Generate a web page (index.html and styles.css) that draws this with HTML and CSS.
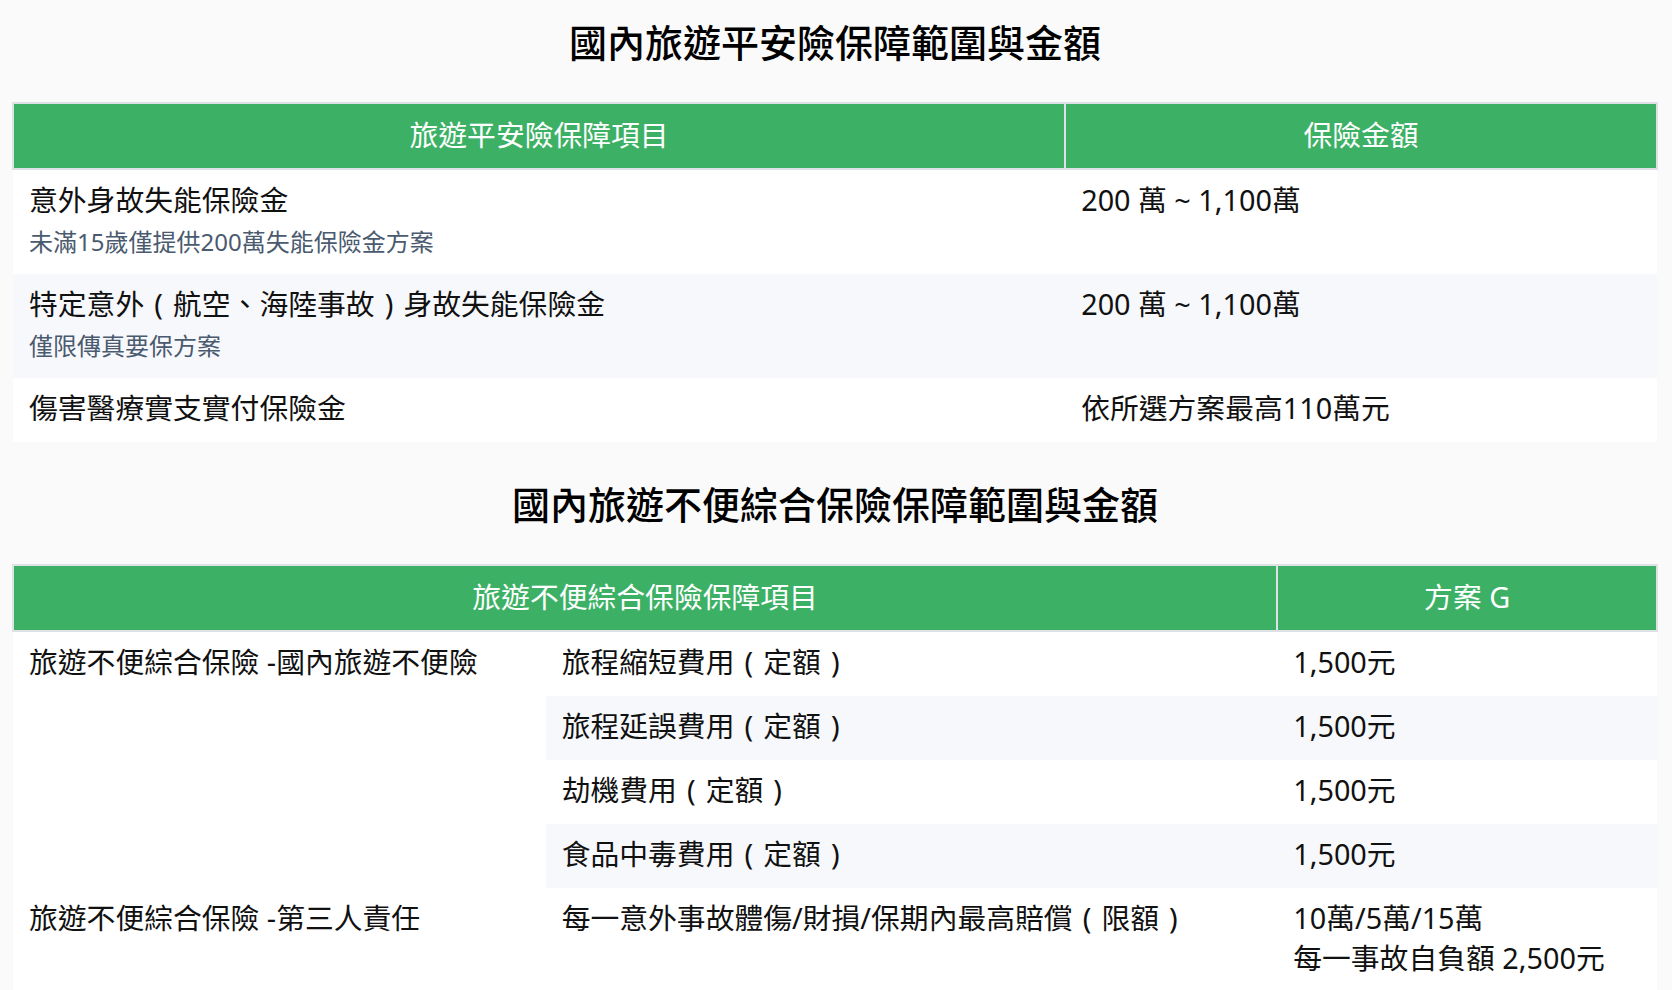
FILE: index.html
```html
<!DOCTYPE html>
<html lang="zh-Hant">
<head>
<meta charset="utf-8">
<title>國內旅遊平安險保障範圍與金額</title>
<link rel="stylesheet" href="styles.css">
</head>
<body>
<main class="page">
  <section class="section">
    <h2 class="section-title">國內旅遊平安險保障範圍與金額</h2>
    <table class="cover-table">
      <colgroup>
        <col class="col-item-a">
        <col class="col-amount-a">
      </colgroup>
      <thead>
        <tr>
          <th>旅遊平安險保障項目</th>
          <th>保險金額</th>
        </tr>
      </thead>
      <tbody>
        <tr>
          <td>
            <div class="item-name">意外身故失能保險金</div>
            <div class="item-note">未滿15歲僅提供200萬失能保險金方案</div>
          </td>
          <td>200 萬 ~ 1,100萬</td>
        </tr>
        <tr>
          <td>
            <div class="item-name">特定意外<span class="fw">(</span>航空、海陸事故<span class="fw">)</span>身故失能保險金</div>
            <div class="item-note">僅限傳真要保方案</div>
          </td>
          <td>200 萬 ~ 1,100萬</td>
        </tr>
        <tr>
          <td>傷害醫療實支實付保險金</td>
          <td>依所選方案最高110萬元</td>
        </tr>
      </tbody>
    </table>
  </section>

  <section class="section">
    <h2 class="section-title">國內旅遊不便綜合保險保障範圍與金額</h2>
    <table class="cover-table">
      <colgroup>
        <col class="col-group-b">
        <col class="col-item-b">
        <col class="col-amount-b">
      </colgroup>
      <thead>
        <tr>
          <th colspan="2">旅遊不便綜合保險保障項目</th>
          <th>方案 G</th>
        </tr>
      </thead>
      <tbody>
        <tr>
          <td class="group-cell" rowspan="4">旅遊不便綜合保險 -國內旅遊不便險</td>
          <td>旅程縮短費用<span class="fw">(</span>定額<span class="fw">)</span></td>
          <td>1,500元</td>
        </tr>
        <tr>
          <td>旅程延誤費用<span class="fw">(</span>定額<span class="fw">)</span></td>
          <td>1,500元</td>
        </tr>
        <tr>
          <td>劫機費用<span class="fw">(</span>定額<span class="fw">)</span></td>
          <td>1,500元</td>
        </tr>
        <tr>
          <td>食品中毒費用<span class="fw">(</span>定額<span class="fw">)</span></td>
          <td>1,500元</td>
        </tr>
        <tr>
          <td class="group-cell">旅遊不便綜合保險 -第三人責任</td>
          <td>每一意外事故體傷/財損/保期內最高賠償<span class="fw">(</span>限額<span class="fw">)</span></td>
          <td>10萬/5萬/15萬<br>每一事故自負額 2,500元</td>
        </tr>
      </tbody>
    </table>
  </section>
</main>
</body>
</html>
```

FILE: styles.css
```css
* {
  box-sizing: border-box;
}

html,
body {
  margin: 0;
  padding: 0;
  background: #fafafa;
}

body {
  font-family: "Noto Sans", "Noto Sans CJK TC", sans-serif;
  color: #111;
}

.page {
  padding: 0 14px 0 12px;
}

.section {
  display: flex;
  flex-direction: column;
}

.section + .section {
  margin-top: 20px;
}

.section-title {
  margin: 0;
  padding: 18px 0 36px;
  font-size: 38px;
  line-height: 48px;
  font-weight: 500;
  text-align: center;
  color: #000;
}

.cover-table {
  width: 100%;
  border-collapse: collapse;
  table-layout: fixed;
  font-size: 28.8px;
  line-height: 40px;
}

.col-item-a {
  width: 64%;
}

.col-amount-a {
  width: 36%;
}

.col-group-b {
  width: 32.4%;
}

.col-item-b {
  width: 44.5%;
}

.col-amount-b {
  width: 23.1%;
}

.cover-table th {
  background: #3cb165;
  color: #fff;
  font-weight: 400;
  text-align: center;
  padding: 11px 16px 13px;
  border: 2px solid #dee2e6;
}

.cover-table td {
  padding: 10px 16px 14px;
  vertical-align: top;
  text-align: left;
  background: #fff;
}

.cover-table tbody tr:nth-child(even) td {
  background: #f7f8fc;
}

.cover-table td.group-cell {
  background: #fff;
}

.fw {
  display: inline-block;
  width: 1em;
  text-align: center;
}

.item-note {
  padding-top: 4px;
  font-size: 24px;
  line-height: 36px;
  color: #4a5a6f;
}
```
